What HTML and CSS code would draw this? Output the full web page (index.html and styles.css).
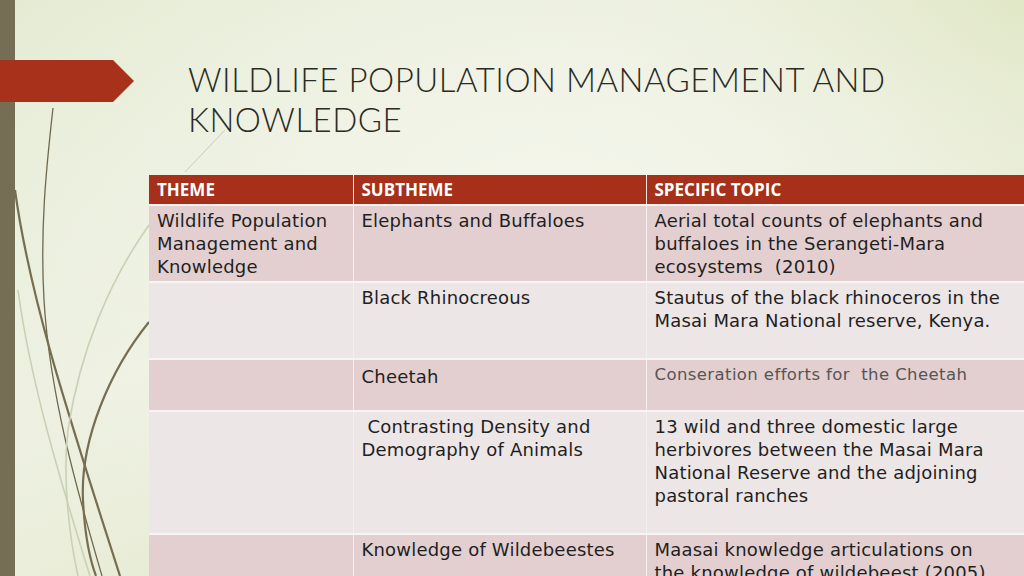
FILE: index.html
```html
<!DOCTYPE html>
<html>
<head>
<meta charset="utf-8">
<link rel="stylesheet" href="styles.css">
</head>
<body>
<div class="slide">
  <div class="side-bar"></div>
  <svg class="curves" width="260" height="576" viewBox="0 0 260 576">
    <path d="M53 108 C46 170 40 230 44 300 C50 400 80 500 102 576" class="c-dark-thin"/>
    <path d="M15 190 C30 300 70 420 120 576" class="c-dark"/>
    <path d="M149 322 C110 370 80 440 83 500 C85 540 90 560 96 576" class="c-dark"/>
    <path d="M149 225 C110 280 80 350 68 430 C62 480 70 540 78 576" class="c-light"/>
    <path d="M18 290 C30 380 60 480 90 576" class="c-light"/>
    <path d="M225 130 L185 172" class="c-faint"/>
  </svg>
  <div class="arrow"></div>
  <div class="content">
    <h1 class="title">WILDLIFE POPULATION MANAGEMENT AND<br>KNOWLEDGE</h1>
    <table class="topics">
      <colgroup>
        <col class="col1"><col class="col2"><col class="col3">
      </colgroup>
      <thead>
        <tr><th>THEME</th><th>SUBTHEME</th><th>SPECIFIC TOPIC</th></tr>
      </thead>
      <tbody>
        <tr class="dark r1">
          <td>Wildlife Population Management and Knowledge</td>
          <td>Elephants and Buffaloes</td>
          <td>Aerial total counts of elephants and buffaloes in the Serangeti-Mara ecosystems&nbsp; (2010)</td>
        </tr>
        <tr class="light r2">
          <td></td>
          <td>Black Rhinocreous</td>
          <td>Stautus of the black rhinoceros in the Masai Mara National reserve, Kenya.</td>
        </tr>
        <tr class="dark r3">
          <td></td>
          <td class="mid">Cheetah</td>
          <td class="small">Conseration efforts for&nbsp; the Cheetah</td>
        </tr>
        <tr class="light r4">
          <td></td>
          <td>&nbsp;Contrasting Density and Demography of Animals</td>
          <td>13 wild and three domestic large herbivores between the Masai Mara National Reserve and the adjoining pastoral ranches</td>
        </tr>
        <tr class="dark r5">
          <td></td>
          <td>Knowledge of Wildebeestes</td>
          <td>Maasai knowledge articulations on the knowledge of wildebeest (2005)</td>
        </tr>
      </tbody>
    </table>
  </div>
</div>
</body>
</html>
```
FILE: styles.css
```css
html, body {
  margin: 0;
  padding: 0;
  width: 1024px;
  height: 576px;
  overflow: hidden;
}
.slide {
  position: relative;
  width: 1024px;
  height: 576px;
  overflow: hidden;
  display: flex;
  background:
    radial-gradient(ellipse 620px 380px at 540px 200px, #f3f5ea 0%, rgba(243,245,234,0) 100%),
    radial-gradient(ellipse 420px 260px at 1024px 0px, #dfe6c3 0%, rgba(223,230,195,0) 100%),
    linear-gradient(160deg, #e4ebd2 0%, #eef1e2 45%, #e6ebd2 75%, #dfe7c8 100%);
  font-family: "DejaVu Sans", sans-serif;
}
.side-bar {
  flex: 0 0 15px;
  background: #766d55;
}
.curves {
  position: absolute;
  left: 0;
  top: 0;
}
.curves path { fill: none; }
.c-dark { stroke: #776e52; stroke-width: 2.2; }
.c-dark-thin { stroke: #6f6850; stroke-width: 1.3; }
.c-light { stroke: #c9d1b5; stroke-width: 1.6; }
.c-faint { stroke: #c8ccbe; stroke-width: 1; }
.arrow {
  position: absolute;
  left: 0;
  top: 60px;
  width: 134px;
  height: 42px;
  background: #a8311b;
  clip-path: polygon(0 0, 113px 0, 134px 21px, 113px 42px, 0 42px);
}
.content {
  position: relative;
  flex: 1;
  padding: 59px 0 0 134px;
}
.title {
  margin: 0 0 36px 39px;
  font-family: "Lato", sans-serif;
  font-weight: 300;
  font-size: 33px;
  line-height: 40px;
  color: #2a2a24;
  letter-spacing: 0.5px;
}
.topics {
  border-collapse: collapse;
  width: 875px;
  table-layout: fixed;
  font-size: 18px;
  line-height: 23px;
  letter-spacing: 0.2px;
  color: #1f1f1f;
}
.col1 { width: 204px; }
.col2 { width: 293px; }
.col3 { width: 378px; }
.topics th {
  background: #a6301a;
  color: #fff;
  font-family: "Open Sans", sans-serif;
  font-weight: 700;
  font-size: 17px;
  letter-spacing: 0;
  text-align: left;
  padding: 2px 8px 3px;
  height: 24px;
  border-right: 1.5px solid #f2e8e4;
  border-bottom: 2px solid #f7f2f0;
}
.topics td {
  vertical-align: top;
  padding: 3px 8px 0;
  border-right: 1.5px solid #f4eeee;
  border-bottom: 2px solid #f7f4f4;
}
.topics td:nth-child(3) { padding-right: 20px; }
.dark td { background: #e3cfcf; }
.light td { background: #ede6e6; }
.r1 td { height: 72px; }
.r2 td { height: 72px; }
.r3 td { height: 45px; }
.r4 td { height: 118px; }
.r5 td { height: 60px; }
.mid { padding-top: 5px !important; }
.small {
  font-size: 16.5px;
  letter-spacing: 0.4px;
  color: #555;
  padding-top: 3px !important;
}
```
